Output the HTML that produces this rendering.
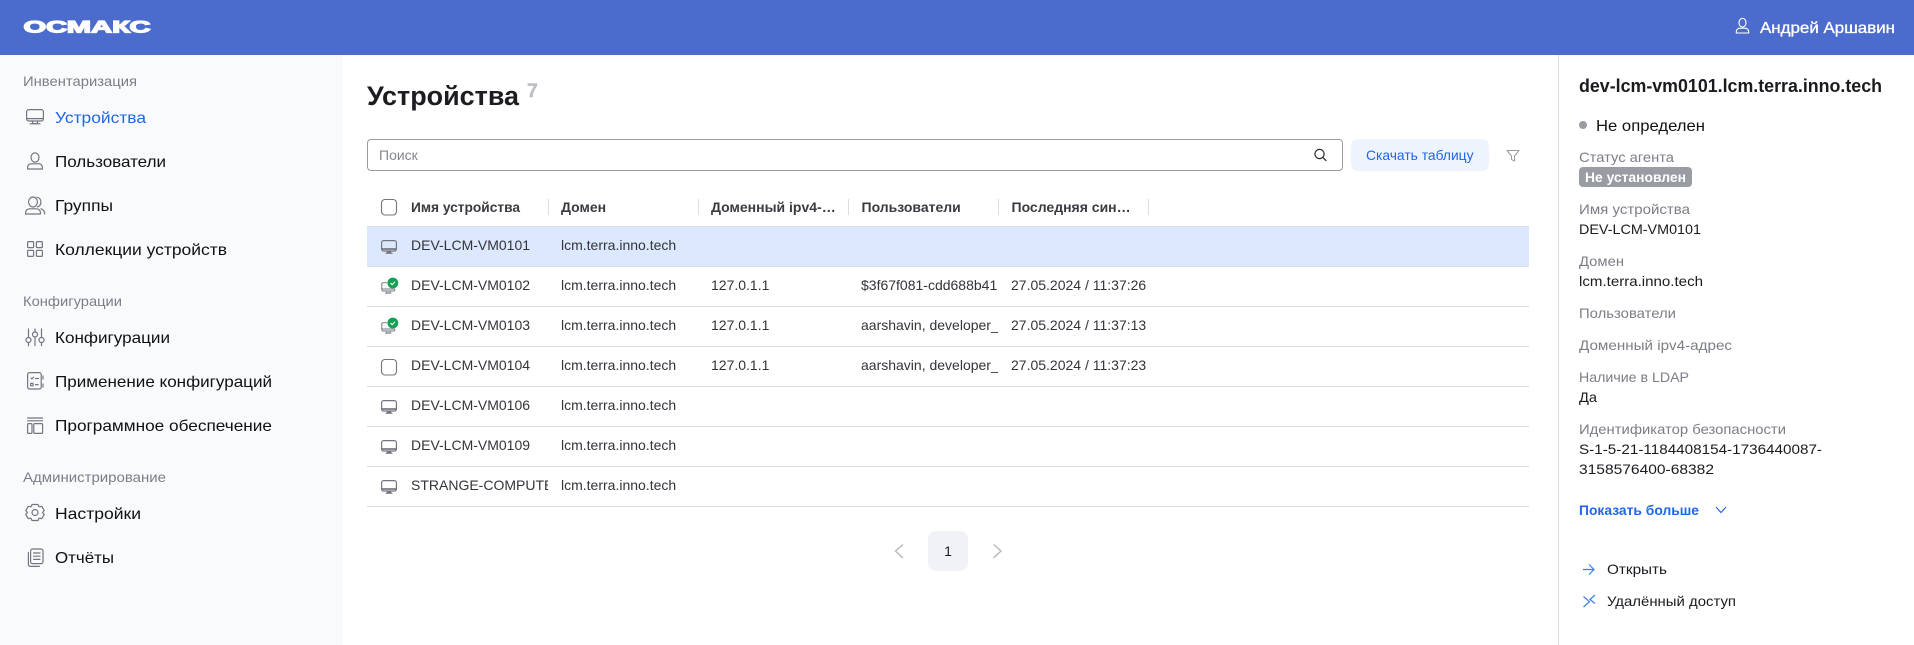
<!DOCTYPE html>
<html lang="ru"><head><meta charset="utf-8"><title>Устройства</title>
<style>
html,body{margin:0;padding:0;background:#fff;width:1914px;height:645px;overflow:hidden}
svg{display:block;font-family:"Liberation Sans",Arial,sans-serif}
.g{fill:#7c7e87;font-size:14px}
.n{fill:#101114;font-size:16px}
.l{fill:#7c7e87;font-size:14px}
.v{fill:#1a1b1f;font-size:14px}
.t{fill:#33343a;font-size:14px}
.h{fill:#3a3b40;font-size:14px;font-weight:bold}
.i{fill:none;stroke:#74767f;stroke-width:1.2;stroke-linecap:round;stroke-linejoin:round}
.cb{fill:#fff;stroke:#74767f;stroke-width:1.1}
.r{stroke:#dcdce2;stroke-width:1}
</style></head><body>
<svg width="1914" height="645" viewBox="0 0 1914 645" xmlns="http://www.w3.org/2000/svg">
<defs>
<clipPath id="c1"><rect x="398" y="226" width="150" height="290"/></clipPath>
<clipPath id="c2"><rect x="848" y="226" width="150" height="290"/></clipPath>
<symbol id="mon" viewBox="0 0 16 16" overflow="visible"><rect x="0.6" y="2.6" width="14.8" height="10.400" rx="2" fill="none" stroke="#74767f" stroke-width="1.2"/><path d="M1 11h14" stroke="#74767f" stroke-width="1.7"/><path d="M6.200 13v1.800h3.600V13" fill="#74767f" stroke="#74767f" stroke-width="1"/><path d="M4.500 15.300h7" fill="none" stroke="#74767f" stroke-width="1"/></symbol>
<symbol id="okc" viewBox="0 0 16 16" overflow="visible"><path d="M0.700 6.200a1.500 1.500 0 0 1 1.500-1.500H6M0.700 6.200v5.300a1.500 1.500 0 0 0 1.500 1.500h10.300a1.500 1.500 0 0 0 1.500-1.500M1 11h13" fill="none" stroke="#8d8f96" stroke-width="1.200"/><path d="M5.500 13v1.800h3.600V13M4 15.300h6.500" fill="none" stroke="#8d8f96" stroke-width="1"/><circle cx="11.800" cy="5" r="5.400" fill="#12a150"/><path d="M9.500 5.100l1.700 1.600 2.800-3" fill="none" stroke="#fff" stroke-width="1.100"/></symbol>
</defs>

<!-- sidebar -->
<rect x="0" y="55" width="343" height="590" fill="#f9fafc"/>
<!-- right border -->
<rect x="1558" y="55" width="1" height="590" fill="#dcdce2"/>
<!-- header -->
<rect x="0" y="0" width="1914" height="55" fill="#4b6ccd"/>
<text x="23.500" y="32.500" fill="#fff" stroke="#fff" stroke-width="1.200" font-size="16.500" font-weight="bold" textLength="127" lengthAdjust="spacingAndGlyphs">ОСМАКС</text>
<g fill="none" stroke="#fff" stroke-width="1.100"><ellipse cx="1742.500" cy="22.700" rx="3.500" ry="4.400"/><path d="M1736.300 33v-1.300a3.500 3.500 0 0 1 3.500-3.500h5.400a3.500 3.500 0 0 1 3.500 3.500V33z"/></g>
<text x="1760" y="33" fill="#fff" font-size="16" stroke="#fff" stroke-width="0.350" textLength="135" lengthAdjust="spacingAndGlyphs">Андрей Аршавин</text>

<!-- sidebar text -->
<text class="g" x="23" y="86" textLength="114" lengthAdjust="spacingAndGlyphs">Инвентаризация</text>
<text x="55" y="123" font-size="16" fill="#1f66e8" textLength="91" lengthAdjust="spacingAndGlyphs">Устройства</text>
<text class="n" x="55" y="167" textLength="111" lengthAdjust="spacingAndGlyphs">Пользователи</text>
<text class="n" x="55" y="211" textLength="58" lengthAdjust="spacingAndGlyphs">Группы</text>
<text class="n" x="55" y="255" textLength="172" lengthAdjust="spacingAndGlyphs">Коллекции устройств</text>
<text class="g" x="23" y="306" textLength="99" lengthAdjust="spacingAndGlyphs">Конфигурации</text>
<text class="n" x="55" y="343" textLength="115" lengthAdjust="spacingAndGlyphs">Конфигурации</text>
<text class="n" x="55" y="387" textLength="217" lengthAdjust="spacingAndGlyphs">Применение конфигураций</text>
<text class="n" x="55" y="431" textLength="217" lengthAdjust="spacingAndGlyphs">Программное обеспечение</text>
<text class="g" x="23" y="482" textLength="143" lengthAdjust="spacingAndGlyphs">Администрирование</text>
<text class="n" x="55" y="519" textLength="86" lengthAdjust="spacingAndGlyphs">Настройки</text>
<text class="n" x="55" y="563" textLength="59" lengthAdjust="spacingAndGlyphs">Отчёты</text>

<!-- sidebar icons -->
<g class="i">
<rect x="26.600" y="109.600" width="16.800" height="11.400" rx="2.200"/><path d="M27 118.600h16M32.500 121v2.600h5V121M30 123.800h10"/>
<ellipse cx="35" cy="157.500" rx="4" ry="4.600"/><path d="M27.600 169v-1.600a3.600 3.600 0 0 1 3.600-3.600h7.600a3.600 3.600 0 0 1 3.600 3.600V169z"/>
<ellipse cx="33" cy="202" rx="4.400" ry="5"/><path d="M37 197.300c2.600.3 3.900 2.300 3.900 4.700s-1.300 4.400-3.600 4.900M25.600 214v-1.400a3.800 3.800 0 0 1 3.800-3.800h7.200a3.800 3.800 0 0 1 3.800 3.800v1.400zM41 208.800c2 .6 3.500 2.400 3.700 5.200"/>
<rect x="27.600" y="241.600" width="6" height="6" rx="1"/><rect x="36.400" y="241.600" width="6" height="6" rx="1"/><rect x="27.600" y="250.400" width="6" height="6" rx="1"/><rect x="36.400" y="250.400" width="6" height="6" rx="1"/>
<path d="M28.500 329v8.400M28.500 342.600v3M35 329v3M35 337v8.600M41.500 329v8.400M41.500 342.600v3"/><circle cx="28.500" cy="340" r="2.500"/><circle cx="35" cy="334.500" r="2.500"/><circle cx="41.500" cy="340" r="2.500"/>
<rect x="27.600" y="372.600" width="13.600" height="16.400" rx="2"/><path d="M43 376v3M43 384v3M31 378l1 1 1.600-1.800M35.500 378.500h3M35.500 384.600h2.600"/><rect x="30.600" y="383.400" width="2.400" height="2.400"/>
<path d="M27.600 418h15M27.600 420.800h15"/><rect x="27.600" y="423.600" width="4.400" height="9.800" rx="1"/><rect x="33.800" y="423.600" width="8.800" height="9.800" rx="1"/>
<path d="M32 504.500h6l1 2.300 2.800-.4 2.400 4-1.600 2.100 1.600 2.100-2.400 4-2.800-.4-1 2.300h-6l-1-2.300-2.800.4-2.400-4 1.600-2.100-1.600-2.100 2.400-4 2.800.4z"/><circle cx="35" cy="512.500" r="3"/>
<rect x="30.600" y="549" width="12.400" height="14.600" rx="2"/><path d="M33.600 553h6.400M33.600 556.200h6.400M33.600 559.400h6.400M28.400 552.600v11.800a2 2 0 0 0 2 2h9"/>
</g>

<!-- title -->
<text x="367" y="105" font-size="26.500" font-weight="bold" fill="#1c1d21" textLength="152" lengthAdjust="spacingAndGlyphs">Устройства</text>
<text x="527" y="97" font-size="19.500" font-weight="bold" fill="#bfc0c5" stroke="#bfc0c5" stroke-width="0.400">7</text>

<!-- search -->
<rect x="367.500" y="139.500" width="975" height="31" rx="3.500" fill="#fff" stroke="#9a9ba1"/>
<text x="379" y="160" font-size="14" fill="#85878f">Поиск</text>
<circle cx="1319.500" cy="154" r="4.600" fill="none" stroke="#26272b" stroke-width="1.200"/><path d="M1323 157.600l3 3" stroke="#26272b" stroke-width="1.200" stroke-linecap="round"/>
<rect x="1351" y="139" width="138" height="32" rx="7" fill="#eef4fd"/>
<text x="1366" y="160" font-size="14" fill="#1f66e8" textLength="107.500" lengthAdjust="spacingAndGlyphs">Скачать таблицу</text>
<path d="M1507 150.500h12l-4.500 5.500v5l-3-1.500V156z" fill="none" stroke="#9a9ca3" stroke-width="1" stroke-linejoin="round"/>

<!-- table head -->
<rect x="381.500" y="199.500" width="15" height="15.500" rx="3.500" class="cb"/>
<text class="h" x="411" y="212" textLength="109" lengthAdjust="spacingAndGlyphs">Имя устройства</text>
<text class="h" x="561" y="212">Домен</text>
<text class="h" x="711" y="212">Доменный ipv4-…</text>
<text class="h" x="861.500" y="212">Пользователи</text>
<text class="h" x="1011.500" y="212">Последняя син…</text>
<g fill="#dcdce2"><rect x="548" y="199" width="1" height="16"/><rect x="698" y="199" width="1" height="16"/><rect x="848" y="199" width="1" height="16"/><rect x="998" y="199" width="1" height="16"/><rect x="1148" y="199" width="1" height="16"/></g>

<!-- rows -->
<rect x="367" y="226" width="1162" height="40" fill="#dce8fd"/>
<g class="r"><path d="M367 226.500H1529M367 266.500H1529M367 306.500H1529M367 346.500H1529M367 386.500H1529M367 426.500H1529M367 466.500H1529M367 506.500H1529"/></g>

<use href="#mon" x="381" y="238" width="16" height="16"/>
<use href="#okc" x="381" y="278" width="16" height="16"/>
<use href="#okc" x="381" y="318" width="16" height="16"/>
<rect x="381.500" y="359.500" width="15" height="15.500" rx="3.500" class="cb"/>
<use href="#mon" x="381" y="398" width="16" height="16"/>
<use href="#mon" x="381" y="438" width="16" height="16"/>
<use href="#mon" x="381" y="478" width="16" height="16"/>

<g clip-path="url(#c1)">
<text class="t" x="411" y="250">DEV-LCM-VM0101</text>
<text class="t" x="411" y="290">DEV-LCM-VM0102</text>
<text class="t" x="411" y="330">DEV-LCM-VM0103</text>
<text class="t" x="411" y="370">DEV-LCM-VM0104</text>
<text class="t" x="411" y="410">DEV-LCM-VM0106</text>
<text class="t" x="411" y="450">DEV-LCM-VM0109</text>
<text class="t" x="411" y="490">STRANGE-COMPUTER</text>
</g>
<text class="t" x="561" y="250">lcm.terra.inno.tech</text>
<text class="t" x="561" y="290">lcm.terra.inno.tech</text>
<text class="t" x="561" y="330">lcm.terra.inno.tech</text>
<text class="t" x="561" y="370">lcm.terra.inno.tech</text>
<text class="t" x="561" y="410">lcm.terra.inno.tech</text>
<text class="t" x="561" y="450">lcm.terra.inno.tech</text>
<text class="t" x="561" y="490">lcm.terra.inno.tech</text>
<text class="t" x="711" y="290">127.0.1.1</text>
<text class="t" x="711" y="330">127.0.1.1</text>
<text class="t" x="711" y="370">127.0.1.1</text>
<g clip-path="url(#c2)">
<text class="t" x="861" y="290">$3f67f081-cdd688b41b</text>
<text class="t" x="861" y="330">aarshavin, developer_1</text>
<text class="t" x="861" y="370">aarshavin, developer_1</text>
</g>
<text class="t" x="1011" y="290">27.05.2024 / 11:37:26</text>
<text class="t" x="1011" y="330">27.05.2024 / 11:37:13</text>
<text class="t" x="1011" y="370">27.05.2024 / 11:37:23</text>

<!-- pager -->
<path d="M903 544.500l-7.500 6.500 7.500 7" fill="none" stroke="#b6b7bd" stroke-width="1.400"/>
<rect x="928" y="531" width="40" height="40" rx="8" fill="#f1f2f5"/>
<text x="948" y="556" font-size="14" fill="#1a1b1f" text-anchor="middle">1</text>
<path d="M993.500 544.500l7.500 6.500-7.500 7" fill="none" stroke="#b6b7bd" stroke-width="1.400"/>

<!-- right panel -->
<text x="1579" y="92" font-size="18" font-weight="bold" fill="#1a1b1f" textLength="303" lengthAdjust="spacingAndGlyphs">dev-lcm-vm0101.lcm.terra.inno.tech</text>
<circle cx="1583" cy="125" r="4" fill="#9a9ca3"/>
<text class="n" x="1596" y="131" textLength="109" lengthAdjust="spacingAndGlyphs">Не определен</text>
<text class="l" x="1579" y="162" textLength="95" lengthAdjust="spacingAndGlyphs">Статус агента</text>
<rect x="1579" y="167" width="113" height="20" rx="4" fill="#9a9ca3"/>
<text x="1585" y="182" font-size="14" font-weight="bold" fill="#fff" textLength="101" lengthAdjust="spacingAndGlyphs">Не установлен</text>
<text class="l" x="1579" y="214" textLength="111" lengthAdjust="spacingAndGlyphs">Имя устройства</text>
<text class="v" x="1579" y="234" textLength="122" lengthAdjust="spacingAndGlyphs">DEV-LCM-VM0101</text>
<text class="l" x="1579" y="266" textLength="45" lengthAdjust="spacingAndGlyphs">Домен</text>
<text class="v" x="1579" y="286" textLength="124" lengthAdjust="spacingAndGlyphs">lcm.terra.inno.tech</text>
<text class="l" x="1579" y="318" textLength="97" lengthAdjust="spacingAndGlyphs">Пользователи</text>
<text class="l" x="1579" y="350" textLength="153" lengthAdjust="spacingAndGlyphs">Доменный ipv4-адрес</text>
<text class="l" x="1579" y="382" textLength="110" lengthAdjust="spacingAndGlyphs">Наличие в LDAP</text>
<text class="v" x="1579" y="402" textLength="18" lengthAdjust="spacingAndGlyphs">Да</text>
<text class="l" x="1579" y="434" textLength="207" lengthAdjust="spacingAndGlyphs">Идентификатор безопасности</text>
<text class="v" x="1579" y="454" textLength="243" lengthAdjust="spacingAndGlyphs">S-1-5-21-1184408154-1736440087-</text>
<text class="v" x="1579" y="474" textLength="135" lengthAdjust="spacingAndGlyphs">3158576400-68382</text>
<text x="1579" y="515" font-size="14" font-weight="bold" fill="#1f66e8" textLength="120" lengthAdjust="spacingAndGlyphs">Показать больше</text>
<path d="M1716 507l5 5.500 5-5.500" fill="none" stroke="#1f66e8" stroke-width="1.100"/>
<path d="M1583 569.500h10M1589 564.500l5 5-5 5" fill="none" stroke="#3b7df0" stroke-width="1.200"/>
<text class="v" x="1607" y="574" textLength="60" lengthAdjust="spacingAndGlyphs">Открыть</text>
<path d="M1583.500 596.500l6 5.200-6 5.300M1595 595l-5 4.500 5 4" fill="none" stroke="#3b7df0" stroke-width="1.200"/>
<text class="v" x="1607" y="606" textLength="129" lengthAdjust="spacingAndGlyphs">Удалённый доступ</text>
</svg>
</body></html>
